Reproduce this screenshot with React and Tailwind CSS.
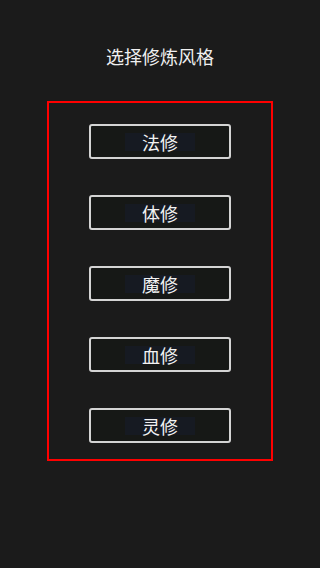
const styles = ['法修', '体修', '魔修', '血修', '灵修'];

export default function App() {
  return (
    <div
      className="min-h-screen bg-[#1b1b1b] flex flex-col items-center"
      style={{ fontFamily: '"Noto Sans CJK SC", "Noto Sans", sans-serif' }}
    >
      <h1 className="pt-[44px] text-[18px] leading-[24px] text-[#f0f0f0]">选择修炼风格</h1>

      <div className="mt-[33px] w-[226px] border-2 border-[#ff0000] flex flex-col items-center gap-[36px] pt-[21px] pb-[16px]">
        {styles.map((name) => (
          <button
            key={name}
            className="w-[142px] h-[35px] border-2 border-[#d4d4d4] rounded-[3px] bg-[#161816] flex items-center justify-center"
          >
            <span className="bg-[#161a22] px-[17px] text-[18px] leading-[18px] text-[#f2f2f2]">{name}</span>
          </button>
        ))}
      </div>
    </div>
  );
}
